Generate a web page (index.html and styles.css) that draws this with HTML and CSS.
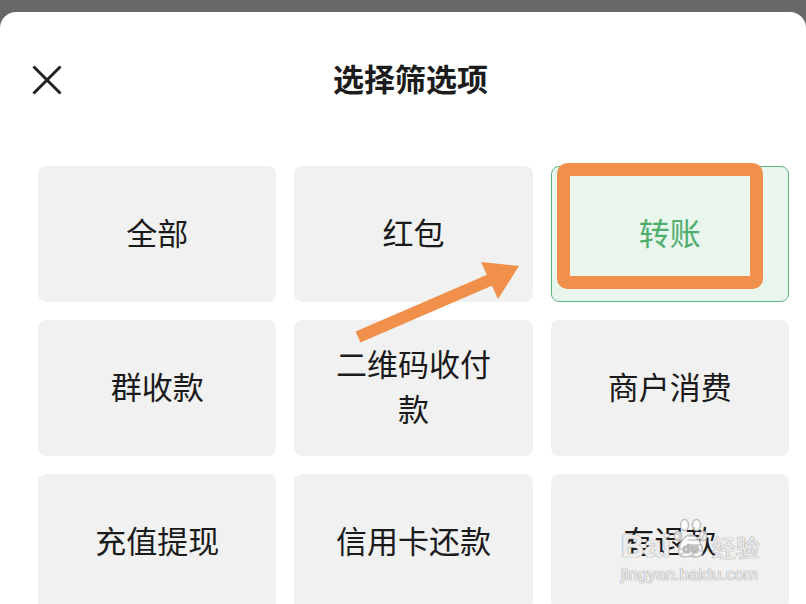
FILE: index.html
```html
<!DOCTYPE html>
<html lang="zh-CN">
  <head>
    <meta charset="UTF-8" />
    <title>选择筛选项</title>
    <link rel="stylesheet" href="styles.css">
  </head>
  <body>
    <div class="sheet">
      <div class="sheet-header">
        <span class="close-btn">
          <svg width="30" height="30" viewBox="0 0 30 30">
            <path d="M1.5 1.5 L28.5 28.5 M28.5 1.5 L1.5 28.5" stroke="#222" stroke-width="3" fill="none" />
          </svg>
        </span>
        <h1 class="title">选择筛选项</h1>
        <span></span>
      </div>

      <div class="options">
        <div class="option">全部</div>
        <div class="option">红包</div>
        <div class="option selected">转账</div>
        <div class="option">群收款</div>
        <div class="option">二维码收付款</div>
        <div class="option">商户消费</div>
        <div class="option">充值提现</div>
        <div class="option">信用卡还款</div>
        <div class="option">有退款</div>
      </div>
    </div>

    <!-- annotation drawn over the screenshot -->
    <svg class="markup" width="806" height="604" viewBox="0 0 806 604">
      <rect x="563.5" y="169.5" width="193" height="113" rx="4" fill="none" stroke="#f0904a" stroke-width="13" />
      <polygon points="355.6,331.5 360.4,342.5 492.4,285.5 487.6,274.5" fill="#f0904a" />
      <polygon points="519,266 481,262 498,299" fill="#f0904a" />
    </svg>

    <div class="watermark">
      <div class="wm-logo">
        <span class="wm-bai">Bai</span>
        <svg class="wm-paw" width="37" height="42" viewBox="0 0 34 42">
          <g fill="rgba(255,255,255,0.8)" stroke="#bdbdbd" stroke-width="1.5">
            <ellipse cx="11" cy="7" rx="4" ry="5.5" />
            <ellipse cx="23" cy="7" rx="4" ry="5.5" />
            <ellipse cx="4.5" cy="18" rx="3.5" ry="4.5" />
            <ellipse cx="29.5" cy="18" rx="3.5" ry="4.5" />
            <path d="M17 17 C10 17 5 27 5 33 C5 39 11 40 17 38 C23 40 29 39 29 33 C29 27 24 17 17 17 Z" />
          </g>
          <text x="17" y="35" text-anchor="middle" font-family="Liberation Sans, sans-serif" font-size="13" font-weight="700" fill="#bdbdbd">du</text>
        </svg>
        <span class="wm-jy">经验</span>
      </div>
      <div class="wm-url">jingyan.baidu.com</div>
    </div>
  </body>
</html>
```

FILE: styles.css
```css
body {
  margin: 0;
  width: 806px;
  height: 604px;
  overflow: hidden;
  background-color: #686868;
  font-family: "Noto Sans CJK SC", "Noto Sans", sans-serif;
  position: relative;
}

.sheet {
  margin-top: 12px;
  height: 592px;
  background-color: #fff;
  border-radius: 16px 16px 0 0;
  overflow: hidden;
}

.sheet-header {
  height: 136px;
  display: grid;
  grid-template-columns: 1fr auto 1fr;
  align-items: center;
  padding: 0 17px 0 32px;
}

.close-btn {
  display: flex;
  width: 30px;
  height: 30px;
}

.title {
  margin: 0 0 4px;
  font-size: 31px;
  font-weight: 700;
  color: #1c1c1c;
  line-height: 40px;
}

.options {
  margin-top: 18px;
  padding: 0 17px 0 38px;
  display: grid;
  grid-template-columns: repeat(3, 1fr);
  grid-auto-rows: 136px;
  gap: 18px;
}

.option {
  display: flex;
  align-items: center;
  justify-content: center;
  text-align: center;
  padding: 0 30px 6px;
  background-color: #f1f1f1;
  border-radius: 8px;
  font-size: 31px;
  line-height: 45px;
  color: #1a1a1a;
  box-sizing: border-box;
}

.option.selected {
  background-color: #e8f6ed;
  border: 1.5px solid #5db77c;
  color: #4fae6d;
}

.markup {
  position: absolute;
  left: 0;
  top: 0;
}

.watermark {
  position: absolute;
  left: 621px;
  top: 514px;
  color: rgba(255, 255, 255, 0.8);
  text-shadow: 0 0 1px #aaa, 0 0 1px #aaa, 0 0 1px #aaa;
}

.wm-logo {
  display: flex;
  align-items: flex-end;
  height: 48px;
}

.wm-bai {
  font-family: "Liberation Sans", sans-serif;
  font-size: 32px;
  font-weight: 700;
  line-height: 32px;
}

.wm-paw {
  margin: 0 3px 2px 1px;
}

.wm-jy {
  font-size: 24px;
  line-height: 30px;
}

.wm-url {
  font-family: "Liberation Sans", sans-serif;
  font-size: 17px;
  line-height: 20px;
  margin-top: 3px;
}
```
